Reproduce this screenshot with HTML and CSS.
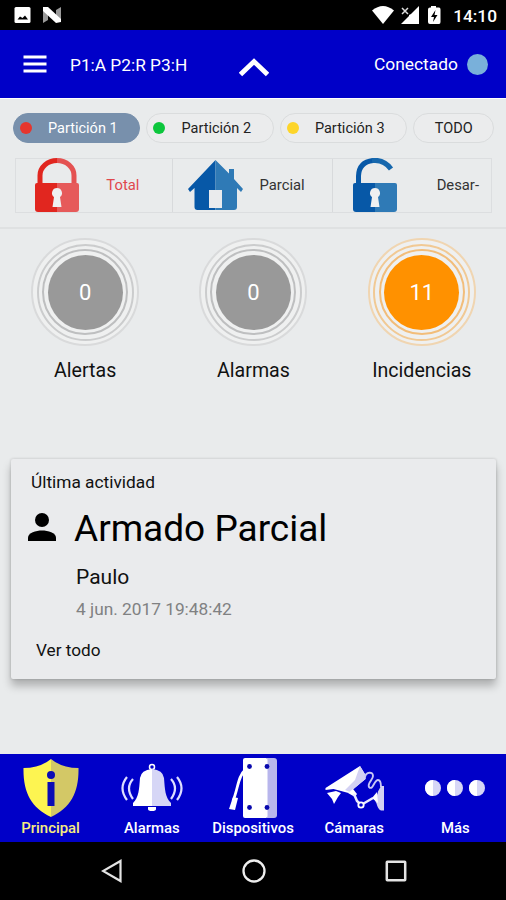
FILE: index.html
```html
<!DOCTYPE html>
<html lang="es">
<head>
    <meta charset="UTF-8">
    <meta name="viewport" content="width=device-width, initial-scale=1.0">
    <title>Alarma</title>
    <link rel="stylesheet" href="styles.css">
</head>
<body>
    <!-- Android status bar -->
    <div class="status-bar">
        <svg class="status-left" width="50" height="18" viewBox="0 0 50 18">
            <rect x="0.5" y="1" width="16" height="16" rx="1.5" fill="#fff"/>
            <path d="M3.500 13.500l2.500-3 2.500 1.500 2.500-2.500 3 4z" fill="#000"/>
            <path d="M29 1l5 3v10l-5 3zM42 4l5-3v15l-5-2z" fill="#999"/>
            <path d="M29 1h5l13 12v3l-5 1L29 5z" fill="#fff"/>
        </svg>
        <div class="status-right">
            <svg width="72" height="20" viewBox="0 0 72 20">
                <path d="M0 5.500Q11-3.500 22 5.500L11 19z" fill="#fff"/>
                <path d="M47 1v18H29l8-8V10l2-1z" fill="#fff"/>
                <path d="M30 3l6 6M36 3l-6 6" stroke="#ddd" stroke-width="1.500"/>
                <path d="M59 2.500V1h5v1.500h3q1.500 0 1.500 2V17q0 2-1.500 2H58q-2 0-2-2V4.500q0-2 2-2z" fill="#fff"/>
                <path d="M63.500 5l-4.500 7h3l-1 5 4.500-7h-3z" fill="#000"/>
            </svg>
            <span class="clock">14:10</span>
        </div>
    </div>

    <header class="header">
        <svg class="menu-icon" width="24" height="18" viewBox="0 0 24 18">
            <path d="M0.500 2h23M0.500 9h23M0.500 16h23" stroke="#fff" stroke-width="3"/>
        </svg>
        <span class="header-title">P1:A P2:R P3:H</span>
        <svg class="chevron" width="30" height="20" viewBox="0 0 30 20">
            <path d="M1.500 17.500L15 4.500L28.500 17.500" fill="none" stroke="#fff" stroke-width="4.800"/>
        </svg>
        <span class="connection">Conectado</span>
        <span class="connection-dot"></span>
    </header>

    <main class="content">
        <div class="chips">
            <button class="chip active"><span class="dot red"></span><span class="chip-text">Partición 1</span></button>
            <button class="chip"><span class="dot green"></span><span class="chip-text">Partición 2</span></button>
            <button class="chip"><span class="dot yellow"></span><span class="chip-text">Partición 3</span></button>
            <button class="chip chip-all">TODO</button>
        </div>

        <div class="arm-modes">
            <div class="mode total">
                <svg width="44" height="54" viewBox="0 0 44 54">
                    <path d="M5 27V17.500A17 15 0 0 1 22 2.500" fill="none" stroke="#e1261f" stroke-width="5"/>
                    <path d="M22 2.500a17 15 0 0 1 17 15V27" fill="none" stroke="#e45252" stroke-width="5"/>
                    <path d="M22 25H2q-2 0-2 2v24q0 3 3 3h19z" fill="#e1261f"/>
                    <path d="M22 25h20q2 0 2 2v24q0 3-3 3H22z" fill="#e65a5a"/>
                    <path d="M22 30a5 5 0 0 0-3 9L17.500 49h9L25 39A5 5 0 0 0 22 30z" fill="#eff0f1"/>
                </svg>
                <span class="mode-text">Total</span>
            </div>
            <div class="mode parcial">
                <svg width="55" height="50" viewBox="0 0 55 50">
                    <path d="M27.500 0L0 29l2 3 4.500-4V47q0 3 3 3h18z" fill="#0758a7"/>
                    <path d="M27.500 0L41 13.500V9h5v10l9 10-2 3-4-4V47q0 3-3 3H27.500z" fill="#2f7ab6"/>
                    <rect x="21" y="30" width="13" height="18" fill="#eaebed"/>
                </svg>
                <span class="mode-text">Parcial</span>
            </div>
            <div class="mode desarmar">
                <svg width="44" height="54" viewBox="0 0 44 54">
                    <path d="M5.500 27V18Q6 4 20 2.500" fill="none" stroke="#0758a7" stroke-width="5"/>
                    <path d="M19 2.600Q31 1 38 11" fill="none" stroke="#1667ad" stroke-width="5"/>
                    <path d="M22 25H2q-2 0-2 2v24q0 3 3 3h19z" fill="#0758a7"/>
                    <path d="M22 25h20q2 0 2 2v24q0 3-3 3H22z" fill="#2f7ab6"/>
                    <path d="M22 30a5 5 0 0 0-3 9L17.500 49h9L25 39A5 5 0 0 0 22 30z" fill="#eff0f1"/>
                </svg>
                <span class="mode-text">Desar-</span>
            </div>
        </div>

        <div class="counters">
            <div class="counter">
                <div class="ring ring-3"><div class="ring ring-2"><div class="ring ring-1"><div class="count">0</div></div></div></div>
                <span class="counter-label">Alertas</span>
            </div>
            <div class="counter">
                <div class="ring ring-3"><div class="ring ring-2"><div class="ring ring-1"><div class="count">0</div></div></div></div>
                <span class="counter-label">Alarmas</span>
            </div>
            <div class="counter orange">
                <div class="ring ring-3"><div class="ring ring-2"><div class="ring ring-1"><div class="count">11</div></div></div></div>
                <span class="counter-label">Incidencias</span>
            </div>
        </div>

        <section class="card">
            <h2 class="card-title">Última actividad</h2>
            <div class="activity">
                <svg width="28" height="28" viewBox="0 0 28 28">
                    <circle cx="14" cy="7" r="7" fill="#000"/>
                    <path d="M0 28v-3.500C0 20 8 17.500 14 17.500S28 20 28 24.500V28z" fill="#000"/>
                </svg>
                <span class="activity-name">Armado Parcial</span>
            </div>
            <p class="activity-user">Paulo</p>
            <p class="activity-date">4 jun. 2017 19:48:42</p>
            <a class="see-all">Ver todo</a>
        </section>
    </main>

    <nav class="tabs">
        <div class="tab selected">
            <svg width="56" height="60" viewBox="0 0 56 60">
                <path d="M28 1Q17 10 0.500 10C0 34 8 50 28 59z" fill="#fdf451"/>
                <path d="M28 1Q39 10 55.500 10C56 34 48 50 28 59z" fill="#d3c866"/>
                <circle cx="28" cy="17" r="4" fill="#0b0bb5"/>
                <rect x="24.500" y="24" width="7" height="24" fill="#0b0bb5"/>
            </svg>
            <span>Principal</span>
        </div>
        <div class="tab">
            <svg width="62" height="60" viewBox="0 0 62 60">
                <circle cx="31" cy="9" r="2.500" fill="none" stroke="#fff" stroke-width="1.500"/>
                <path d="M31 11Q20 12 19 20c-1 12-1 19-7 25v3h19z" fill="#fff"/>
                <path d="M31 11Q42 12 43 20c1 12 1 19 7 25v3H31z" fill="#d6d6f6"/>
                <path d="M27 49h8v2q0 2-4 2t-4-2z" fill="#fff"/>
                <path d="M12 21q-8 9 0 20M6 19q-9 11 0 23M50 21q8 9 0 20M56 19q9 11 0 23" fill="none" stroke="#dedeff" stroke-width="2.200"/>
            </svg>
            <span>Alarmas</span>
        </div>
        <div class="tab">
            <svg width="52" height="60" viewBox="0 0 52 60">
                <path d="M18 12C11 18 11 31 6 43" fill="none" stroke="#fff" stroke-width="2.800"/>
                <path d="M6 39l5 1-3 12-6-1z" fill="#fff"/>
                <path d="M40 0h7q3 0 3 3v54q0 3-3 3H40z" fill="#b8b6ec"/>
                <path d="M18 0h21q1.500 0 1.500 2v56q0 2-1.500 2H18q-2 0-2-2V2q0-2 2-2z" fill="#fff"/>
                <g fill="#0808ad">
                    <circle cx="22.500" cy="8.500" r="2.400"/>
                    <circle cx="40" cy="8.500" r="2.400"/>
                    <circle cx="22.500" cy="49.500" r="2.400"/>
                    <circle cx="40" cy="49.500" r="2.400"/>
                </g>
            </svg>
            <span>Dispositivos</span>
        </div>
        <div class="tab">
            <svg width="60" height="60" viewBox="0 0 60 60">
                <path d="M36 8L1.500 30v2l8-1 15 4 17-14v-4z" fill="#fff"/>
                <path d="M36 8l5.500 9v4L26 34l-5-2L31 22z" fill="#d3d1f3"/>
                <path d="M3 35l9-2 5 2-3 4-4 7-2-5z" fill="#fff"/>
                <path d="M24 35l5-4 4 5-2 3z" fill="#fff"/>
                <path d="M30 36l3 7 4 4 12-7" fill="none" stroke="#e9e9ff" stroke-width="2.500"/>
                <circle cx="37" cy="47" r="2.700" fill="#0000c8" stroke="#fff" stroke-width="1.800"/>
                <path d="M41 19c1-5 8-6 8-1 0 4-6 7-4 11 4 4 5-7 9-7q3 0 3 7" fill="none" stroke="#c7c6f5" stroke-width="1.900"/>
                <path d="M57 28h3v24.500h-3q-3-1-4.500-7l-3-6q4-1 4.500-6z" fill="#d3d1f3"/>
                <path d="M48 40l5-6 1 11z" fill="#fff"/>
            </svg>
            <span>Cámaras</span>
        </div>
        <div class="tab">
            <svg width="60" height="60" viewBox="0 0 60 60">
                <g fill="#d6d6f6">
                    <circle cx="8" cy="30" r="8"/>
                    <circle cx="30" cy="30" r="8"/>
                    <circle cx="52" cy="30" r="8"/>
                </g>
                <path d="M8 22a8 8 0 0 0 0 16zM30 22a8 8 0 0 0 0 16zM52 22a8 8 0 0 0 0 16z" fill="#fff"/>
            </svg>
            <span>Más</span>
        </div>
    </nav>

    <!-- Android navigation bar -->
    <div class="system-nav">
        <svg width="22" height="24" viewBox="0 0 22 24">
            <path d="M19.500 2v20L2 12z" fill="none" stroke="#e4e4e4" stroke-width="2.200"/>
        </svg>
        <svg width="24" height="24" viewBox="0 0 24 24">
            <circle cx="12" cy="12" r="10.500" fill="none" stroke="#eee" stroke-width="2.300"/>
        </svg>
        <svg width="22" height="22" viewBox="0 0 22 22">
            <rect x="1.800" y="1.800" width="18.400" height="18.400" rx="0.500" fill="none" stroke="#e4e4e4" stroke-width="2.500"/>
        </svg>
    </div>
</body>
</html>
```
FILE: styles.css
```css
/* Reset and general styling */
* {
    margin: 0;
    padding: 0;
    box-sizing: border-box;
    font-family: Roboto, "Noto Sans", sans-serif;
}

body {
    width: 506px;
    height: 900px;
    background-color: #e9ebec;
    color: #111;
    display: flex;
    flex-direction: column;
    overflow: hidden;
}

svg {
    display: block;
    flex-shrink: 0;
}

/* Status bar */
.status-bar {
    height: 30px;
    background: #000;
    display: flex;
    align-items: center;
    justify-content: space-between;
    padding: 0 9px 0 14px;
}

.status-right {
    display: flex;
    align-items: center;
    gap: 9px;
}

.clock {
    color: #fff;
    font-size: 17.3px;
    font-weight: 500;
    line-height: 30px;
    padding-top: 2px;
}

/* Header */
.header {
    height: 69px;
    background: #0000c8;
    border-bottom: 1px solid #fff;
    color: #fff;
    display: flex;
    align-items: center;
    padding: 0 18px 0 23px;
}

.header-title {
    width: 146px;
    margin-left: 23px;
    padding-top: 2px;
    font-size: 17.3px;
    white-space: nowrap;
}

.chevron {
    margin: 6px 0 0 23px;
}

.connection {
    margin-left: auto;
    font-size: 17.4px;
}

.connection-dot {
    width: 21px;
    height: 21px;
    margin-left: 9px;
    border-radius: 50%;
    background: #79b0da;
}

/* Main area */
.content {
    height: 655px;
    display: flex;
    flex-direction: column;
}

.chips {
    display: flex;
    gap: 6px;
    padding: 14px 12px 0 13px;
}

.chip {
    width: 128px;
    height: 30px;
    display: flex;
    align-items: center;
    border: 1px solid #dadcdd;
    border-radius: 15px;
    background: #ebeced;
    color: #222;
    font-size: 14.5px;
    padding: 1px 0 0 6px;
}

.chip.active {
    background: #7890ac;
    border-color: #7890ac;
    color: #fff;
}

.chip-text {
    margin-left: 16px;
}

.chip-all {
    width: 81px;
    justify-content: center;
    padding: 1px 0 0;
}

.dot {
    width: 12px;
    height: 12px;
    margin-bottom: 1px;
    border-radius: 50%;
}

.red {
    background: #e6352d;
}

.green {
    background: #0cc63c;
}

.yellow {
    background: #fdd52a;
}

/* Arm mode selector */
.arm-modes {
    height: 55px;
    margin: 15px 14px 0 15px;
    display: flex;
    border: 1px solid #dcdee0;
}

.mode {
    width: 160px;
    display: flex;
    align-items: center;
    justify-content: space-between;
    font-size: 14.8px;
    padding: 0 12px 0 20px;
    border-left: 1px solid #d8dadc;
    color: #333;
}

.mode svg {
    margin-top: -1px;
}

.mode-text {
    margin-top: -2px;
}

.mode.total {
    width: 157px;
    padding: 0 33px 0 19px;
    border-left: none;
    color: #e0484c;
}

.mode.parcial {
    padding: 0 27px 0 15px;
}

/* Counters */
.counters {
    margin-top: 14px;
    padding: 9px 0 0 1px;
    border-top: 2px solid #dfe1e2;
    display: flex;
}

.counter {
    flex: 1;
    display: flex;
    flex-direction: column;
    align-items: center;
}

.ring {
    border-radius: 50%;
    padding: 3.5px;
    background: #eff0f0;
    border: 2px solid #bebfc0;
}

.ring-3 {
    border-color: #d9dadb;
}

.ring-2 {
    border-color: #cbcccd;
}

.count {
    width: 75px;
    height: 75px;
    border-radius: 50%;
    background: #999;
    color: #fff;
    font-size: 22px;
    line-height: 76px;
    text-align: center;
}

.orange .count {
    background: #ff9100;
}

.orange .ring-1 {
    border-color: #f2bd7a;
}

.orange .ring-2 {
    border-color: #f1c994;
}

.orange .ring-3 {
    border-color: #f0d5b1;
}

.counter-label {
    margin-top: 12px;
    font-size: 19.6px;
    line-height: 26px;
}

/* Last activity card */
.card {
    height: 220px;
    margin: 75px 10px 0 11px;
    padding: 12px 20px 0 17px;
    background: #eaebed;
    border-radius: 2px;
    box-shadow: 0 7px 8px rgba(0, 0, 0, 0.25), 0 0 3px rgba(0, 0, 0, 0.18);
}

.card-title {
    margin-left: 3px;
    font-size: 17.3px;
    font-weight: 400;
    line-height: 22px;
}

.activity {
    display: flex;
    align-items: center;
    gap: 18px;
    margin-top: 13px;
}

.activity svg {
    margin-bottom: 4px;
}

.activity-name {
    font-size: 37px;
    line-height: 46px;
    white-space: nowrap;
    color: #000;
}

.activity-user {
    margin: 12px 0 0 48px;
    font-size: 21px;
    line-height: 26px;
}

.activity-date {
    margin: 8px 0 0 48px;
    font-size: 17.3px;
    line-height: 22px;
    color: #808182;
}

.see-all {
    display: block;
    margin: 19px 0 0 8px;
    font-size: 17.2px;
    line-height: 22px;
}

/* Bottom tabs */
.tabs {
    height: 88px;
    background: #0000c8;
    display: flex;
    color: #fff;
}

.tab {
    flex: 1;
    display: flex;
    flex-direction: column;
    align-items: center;
    padding-top: 4px;
    font-size: 14.9px;
    font-weight: 500;
    line-height: 20px;
}

.tab.selected {
    color: #f6ec80;
}

/* System navigation */
.system-nav {
    height: 58px;
    background: #000;
    display: flex;
    align-items: center;
    justify-content: space-between;
    padding: 0 99px 0 101px;
}
```
